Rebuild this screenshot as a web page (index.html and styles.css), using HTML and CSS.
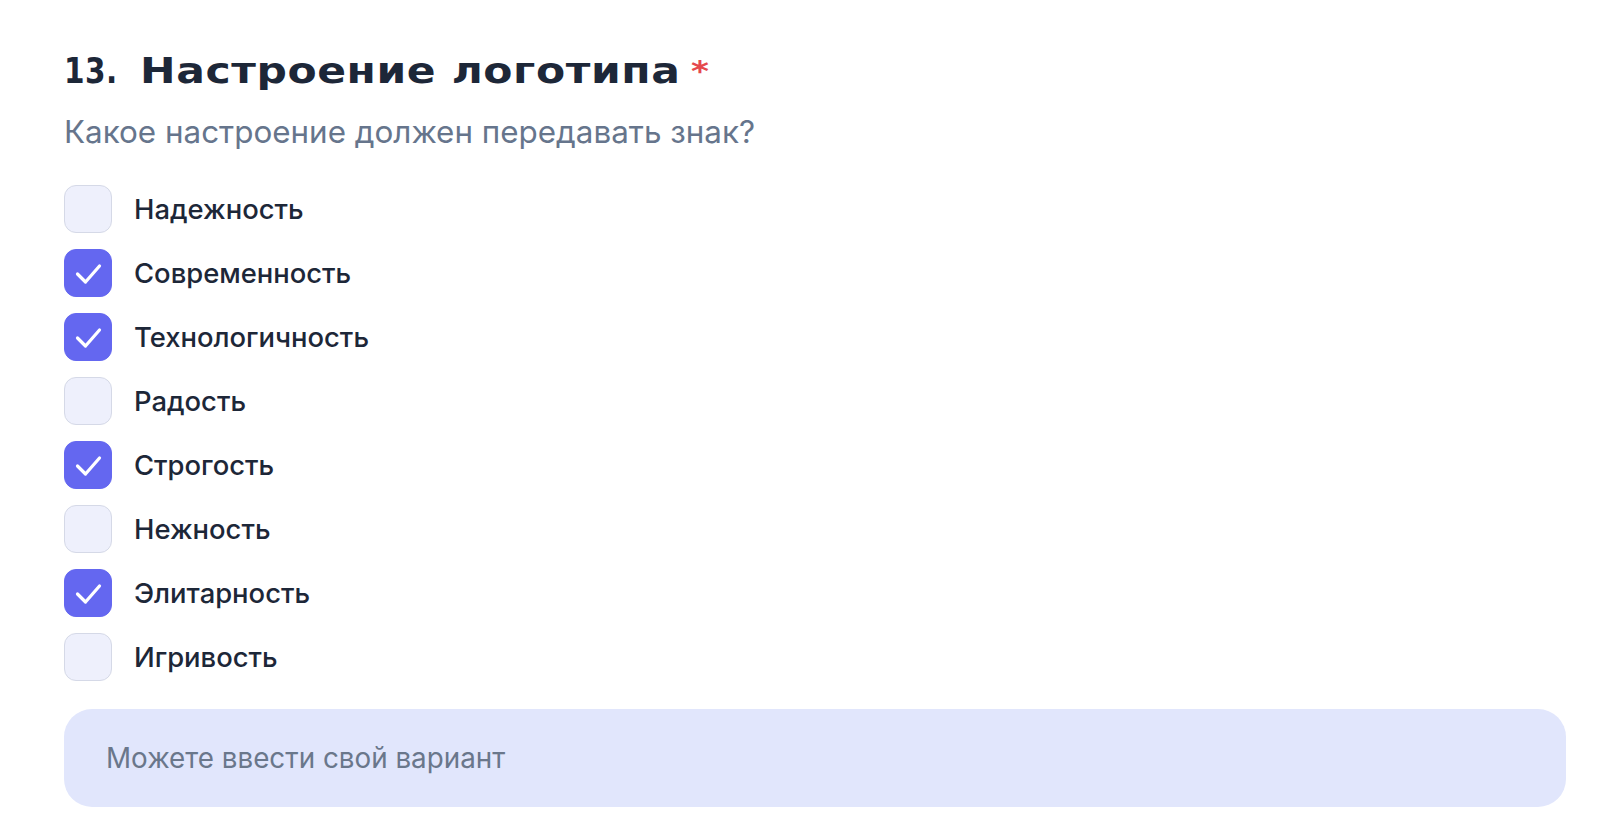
FILE: index.html
```html
<!DOCTYPE html>
<html lang="ru">
<head>
<meta charset="utf-8">
<title>Настроение логотипа</title>
<link rel="stylesheet" href="styles.css">
</head>
<body>
<section class="question">
  <h2 class="q-title"><span class="q-num">13.</span><span class="q-text">Настроение логотипа<span class="q-req">*</span></span></h2>
  <p class="q-sub">Какое настроение должен передавать знак?</p>
  <ul class="options">
    <li class="option"><span class="box"></span><span class="label">Надежность</span></li>
    <li class="option"><span class="box checked"><svg viewBox="0 0 48 48" width="48" height="48"><path d="M13.5 25 L21.5 33 L35.5 17" fill="none" stroke="#fff" stroke-width="3.2" stroke-linecap="round" stroke-linejoin="round"/></svg></span><span class="label">Современность</span></li>
    <li class="option"><span class="box checked"><svg viewBox="0 0 48 48" width="48" height="48"><path d="M13.5 25 L21.5 33 L35.5 17" fill="none" stroke="#fff" stroke-width="3.2" stroke-linecap="round" stroke-linejoin="round"/></svg></span><span class="label">Технологичность</span></li>
    <li class="option"><span class="box"></span><span class="label">Радость</span></li>
    <li class="option"><span class="box checked"><svg viewBox="0 0 48 48" width="48" height="48"><path d="M13.5 25 L21.5 33 L35.5 17" fill="none" stroke="#fff" stroke-width="3.2" stroke-linecap="round" stroke-linejoin="round"/></svg></span><span class="label">Строгость</span></li>
    <li class="option"><span class="box"></span><span class="label">Нежность</span></li>
    <li class="option"><span class="box checked"><svg viewBox="0 0 48 48" width="48" height="48"><path d="M13.5 25 L21.5 33 L35.5 17" fill="none" stroke="#fff" stroke-width="3.2" stroke-linecap="round" stroke-linejoin="round"/></svg></span><span class="label">Элитарность</span></li>
    <li class="option"><span class="box"></span><span class="label">Игривость</span></li>
  </ul>
  <div class="own">Можете ввести свой вариант</div>
</section>
</body>
</html>
```

FILE: styles.css
```css
html, body {
  margin: 0;
  padding: 0;
  background: #ffffff;
}
body {
  font-family: Inter, "Noto Sans", sans-serif;
  color: #1d2738;
}
.question {
  padding: 50px 44px 0 64px;
  display: flex;
  flex-direction: column;
}
.q-title {
  margin: 0;
  display: flex;
  align-items: baseline;
  font-family: "DejaVu Sans", sans-serif;
  font-weight: 700;
  font-size: 36px;
  line-height: 41px;
  letter-spacing: 0.5px;
  color: #1d2738;
  white-space: nowrap;
}
.q-num {
  display: inline-block;
  transform: scaleX(0.82);
  transform-origin: left center;
  margin-right: 11px;
}
.q-text {
  display: inline-block;
  transform: scaleX(1.18);
  transform-origin: left center;
}
.q-req {
  display: inline-block;
  color: #e5484d;
  font-size: 29px;
  letter-spacing: 0;
  margin-left: 9px;
  transform: translateY(-2px);
}
.q-sub {
  margin: 18px 0 0;
  font-size: 31.4px;
  line-height: 40px;
  color: #66758c;
  font-weight: 400;
}
.options {
  list-style: none;
  margin: 33px 0 0;
  padding: 0;
  display: flex;
  flex-direction: column;
  gap: 16px;
}
.option {
  display: flex;
  align-items: center;
  gap: 22px;
  height: 48px;
}
.box {
  width: 48px;
  height: 48px;
  box-sizing: border-box;
  border-radius: 12px;
  background: #eef0fc;
  border: 1.5px solid #d5d9e7;
  flex: none;
  display: flex;
}
.box.checked {
  background: #6467f0;
  border-color: #6467f0;
}
.box svg {
  margin: -1.5px;
}
.label {
  font-size: 27.4px;
  font-weight: 500;
  color: #1d2738;
}
.own {
  margin-top: 28px;
  height: 98px;
  border-radius: 28px;
  background: #e1e6fc;
  display: flex;
  align-items: center;
  padding-left: 42px;
  font-size: 27.8px;
  color: #6a778b;
}
```
